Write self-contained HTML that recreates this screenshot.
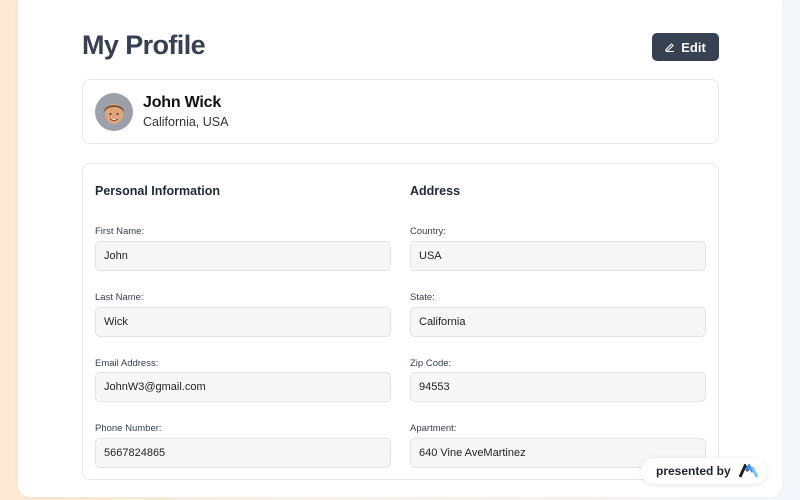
<!DOCTYPE html>
<html><head><meta charset="utf-8"><style>
*{box-sizing:border-box;margin:0;padding:0}
body{width:800px;height:500px;overflow:hidden;font-family:"Liberation Sans",sans-serif;background:linear-gradient(90deg,#fde9d3 0%,#fbf1ea 40%,#f4f7fb 100%);position:relative}
.card{position:absolute;left:18px;top:-10px;width:764px;height:507px;background:#fff;border-radius:12px;box-shadow:0 0 6px rgba(0,0,0,.04)}
h1{position:absolute;left:82px;top:30px;font-size:27px;font-weight:700;color:#374151;letter-spacing:-.6px}
.edit{position:absolute;left:652px;top:33px;width:67px;height:28px;background:#374151;border-radius:5px;color:#fff;font-size:13px;font-weight:700;display:flex;align-items:center;justify-content:center;gap:6px}
.box{position:absolute;left:82px;width:637px;border:1px solid #e8e8e8;border-radius:8px;background:#fff}
.av{position:absolute;left:12px;top:13px;width:38px;height:38px;border-radius:50%;background:#9ca0a8;overflow:hidden}
.name{position:absolute;left:60px;top:14px;font-size:16px;font-weight:700;color:#111;letter-spacing:-.2px}
.loc{position:absolute;left:60px;top:35px;font-size:12.5px;color:#333}
.sec{position:absolute;font-size:12.5px;font-weight:700;color:#1f2937}
.lab{position:absolute;font-size:9.5px;color:#374151}
.inp{position:absolute;width:296px;height:30px;background:#f7f7f7;border:1px solid #e3e3e3;border-radius:5px;font-size:11px;color:#222;padding:8px 8px}
.badge{position:absolute;left:641px;top:458px;width:126px;height:26px;background:#fff;border-radius:13px;box-shadow:0 1px 6px rgba(0,0,0,.1);font-size:12px;font-weight:700;color:#1f2430;display:flex;align-items:center;padding-left:15px;gap:8px}
</style></head><body>
<div class="card"></div>
<h1>My Profile</h1>
<div class="edit"><svg width="10" height="10" viewBox="0 0 10 10"><path d="M1 7.5L6.5 2l1.5 1.5L2.5 9H1z M1 9.5h8" stroke="#fff" stroke-width="1.1" fill="none"/></svg>Edit</div>
<div class="box" style="top:79px;height:65px">
<div class="av"><svg width="38" height="38" viewBox="0 0 38 38"><ellipse cx="19" cy="21" rx="9" ry="10" fill="#e0a57a"/><path d="M9 19c0-9 20-9 20 0c-2-3-5-5-10-5s-8 2-10 5z" fill="#7a4a2a"/><circle cx="15.5" cy="21" r="1" fill="#333"/><circle cx="22.5" cy="21" r="1" fill="#333"/><path d="M15 26q4 3 8 0" stroke="#7a3a20" fill="#fff" stroke-width="1"/></svg></div>
<div class="name">John Wick</div><div class="loc">California, USA</div>
</div>
<div class="box" style="top:163px;height:317px"></div>
<div class="sec" style="left:95px;top:184px">Personal Information</div>
<div class="sec" style="left:410px;top:184px">Address</div>
<div class="lab" style="left:95px;top:226px">First Name:</div><div class="inp" style="left:95px;top:241px">John</div>
<div class="lab" style="left:95px;top:292px">Last Name:</div><div class="inp" style="left:95px;top:307px">Wick</div>
<div class="lab" style="left:95px;top:358px">Email Address:</div><div class="inp" style="left:95px;top:372px">JohnW3@gmail.com</div>
<div class="lab" style="left:95px;top:423px">Phone Number:</div><div class="inp" style="left:95px;top:438px">5667824865</div>
<div class="lab" style="left:410px;top:226px">Country:</div><div class="inp" style="left:410px;top:241px">USA</div>
<div class="lab" style="left:410px;top:292px">State:</div><div class="inp" style="left:410px;top:307px">California</div>
<div class="lab" style="left:410px;top:358px">Zip Code:</div><div class="inp" style="left:410px;top:372px">94553</div>
<div class="lab" style="left:410px;top:423px">Apartment:</div><div class="inp" style="left:410px;top:438px">640 Vine AveMartinez</div>
<div class="badge">presented by <svg width="20" height="14" viewBox="0 0 20 14"><path d="M1 13L6 2l3 5" stroke="#222" stroke-width="3" fill="none"/><path d="M7 6l3-4 4 6" stroke="#2b8cf0" stroke-width="3" fill="none"/><path d="M13 3l5 10" stroke="#7cc4fa" stroke-width="3" fill="none"/></svg></div>
</body></html>
